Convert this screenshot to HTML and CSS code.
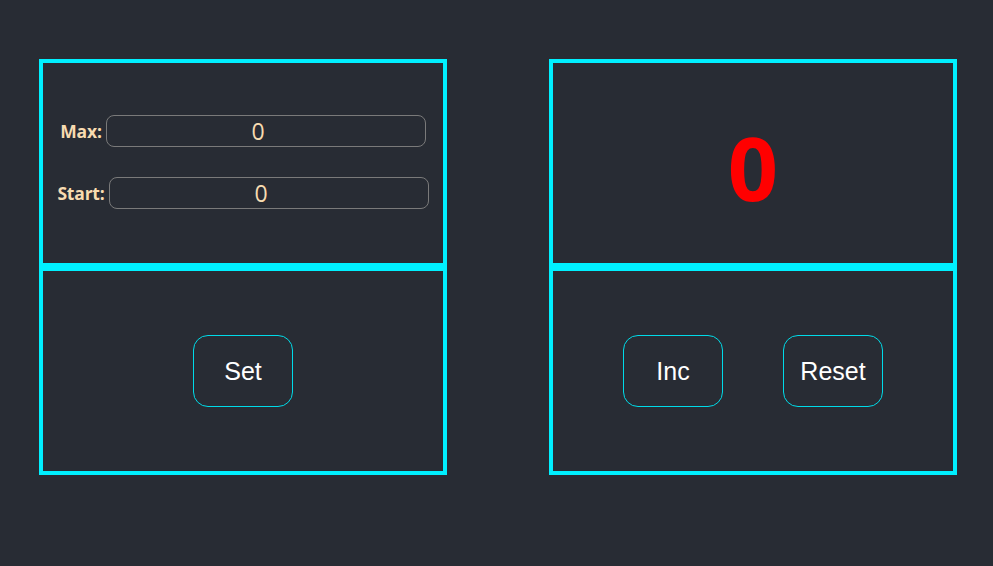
FILE: index.html
```html
<!DOCTYPE html>
<html>
<head>
<meta charset="utf-8">
<link rel="stylesheet" href="styles.css">
</head>
<body>
<div class="app">
  <div class="counter">
    <div class="box settings">
      <div class="field">
        <label class="label">Max:</label>
        <input class="input" type="number" value="0">
      </div>
      <div class="field">
        <label class="label">Start:</label>
        <input class="input" type="number" value="0">
      </div>
    </div>
    <div class="box controls">
      <button class="btn">Set</button>
    </div>
  </div>
  <div class="counter">
    <div class="box display">
      <span class="value">0</span>
    </div>
    <div class="box controls">
      <button class="btn">Inc</button>
      <button class="btn">Reset</button>
    </div>
  </div>
</div>
</body>
</html>
```

FILE: styles.css
```css
html, body {
  margin: 0;
  padding: 0;
  background: #282c34;
  height: 100%;
}

.app {
  display: flex;
  gap: 102px;
  padding: 59px 0 0 39px;
}

.counter {
  display: flex;
  flex-direction: column;
}

.box {
  width: 400px;
  height: 200px;
  border: 4px solid #00f0ff;
  display: flex;
  align-items: center;
  justify-content: center;
}

.settings {
  flex-direction: column;
  gap: 30px;
  padding-bottom: 2px;
  box-sizing: content-box;
  height: 198px;
}

.field {
  display: flex;
  align-items: center;
  gap: 4px;
}

.label {
  font-family: "Open Sans", "Noto Sans", sans-serif;
  font-weight: 700;
  font-size: 17.5px;
  letter-spacing: -0.2px;
  color: #f7dbb0;
}

.input {
  box-sizing: border-box;
  width: 320px;
  height: 32px;
  border: 1px solid #7a7a7a;
  border-radius: 8px;
  background: transparent;
  color: #f7dbb0;
  font-family: "Open Sans", "Noto Sans", sans-serif;
  font-size: 23px;
  text-align: center;
  padding: 0 15px 0 0;
  outline: none;
  -moz-appearance: textfield;
}

.input::-webkit-outer-spin-button,
.input::-webkit-inner-spin-button {
  -webkit-appearance: none;
  margin: 0;
}

.value {
  font-family: "Open Sans", "Noto Sans", sans-serif;
  font-weight: 700;
  font-size: 88px;
  color: #ff0000;
  line-height: 1;
  padding-top: 8px;
}

.controls {
  gap: 60px;
}

.btn {
  box-sizing: border-box;
  width: 100px;
  height: 72px;
  border: 1px solid #00dbe8;
  border-radius: 15px;
  background: transparent;
  color: #ffffff;
  font-family: "Liberation Sans", Arial, sans-serif;
  font-size: 25px;
  padding: 0;
}
```
